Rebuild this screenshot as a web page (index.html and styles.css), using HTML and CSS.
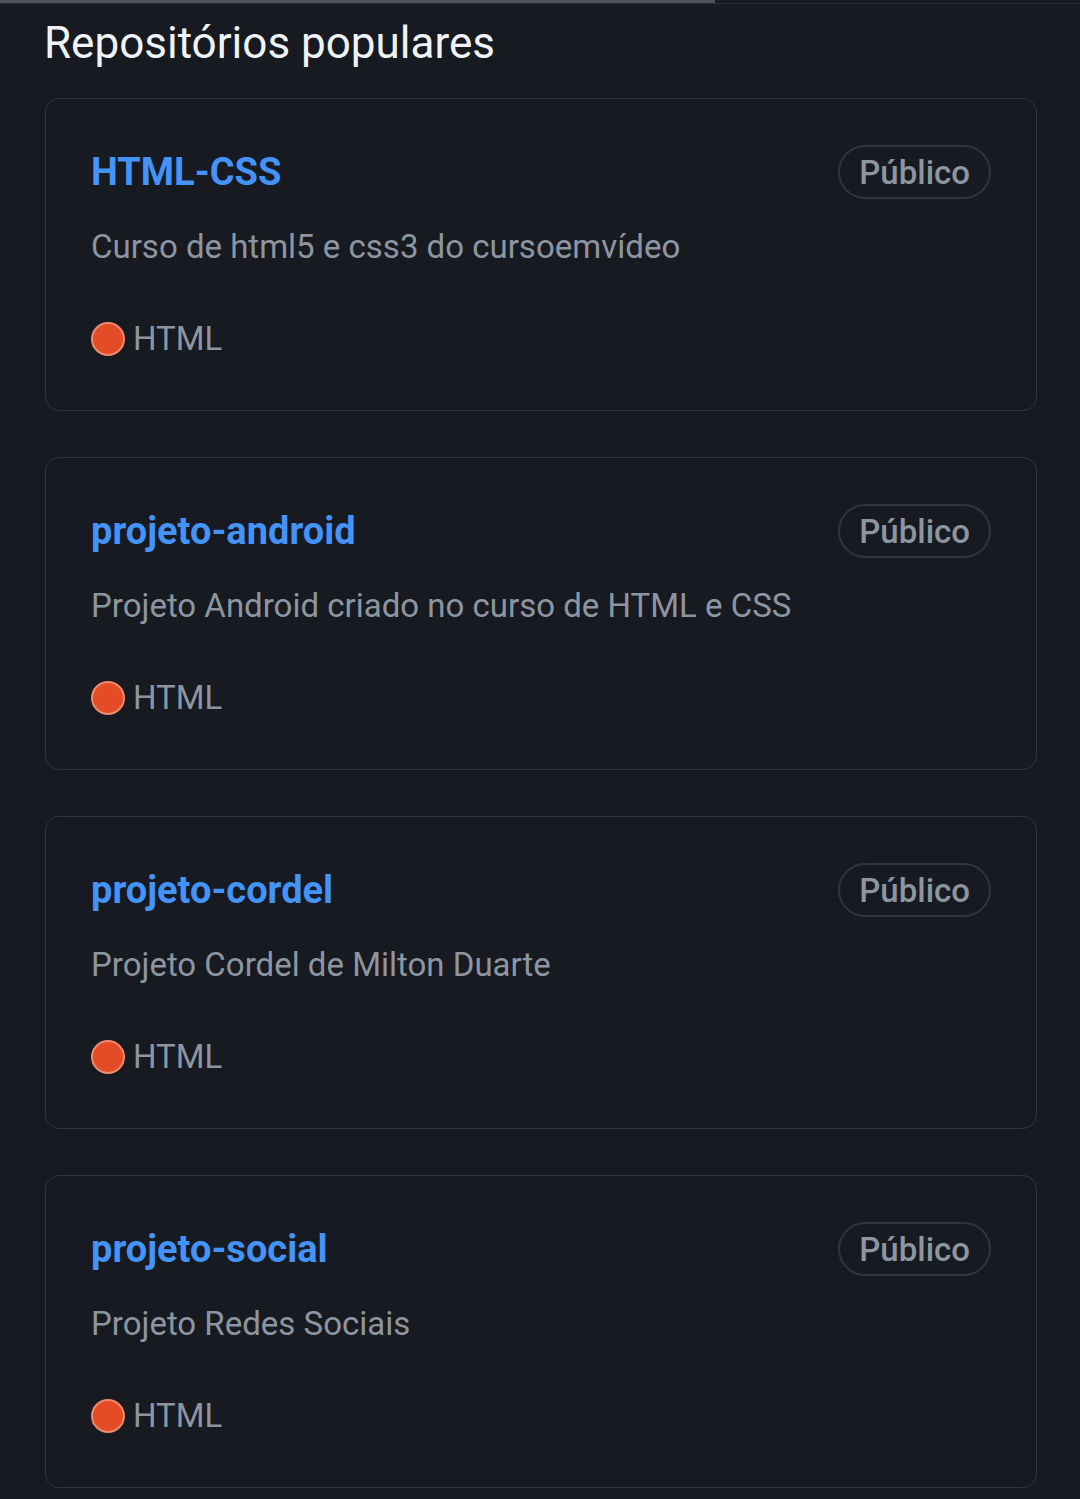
FILE: index.html
```html
<!DOCTYPE html>
<html lang="pt">
<head>
<meta charset="utf-8">
<title>Repositórios populares</title>
<link rel="stylesheet" href="styles.css">
</head>
<body>
<div class="topbar"><div class="topbar-fill"></div></div>
<main class="page">
  <h2 class="heading">Repositórios populares</h2>
  <div class="list">
    <div class="card">
      <div class="card-head"><a class="repo">HTML-CSS</a><span class="badge">Público</span></div>
      <p class="desc">Curso de html5 e css3 do cursoemvídeo</p>
      <div class="lang"><span class="dot"></span><span>HTML</span></div>
    </div>
    <div class="card">
      <div class="card-head"><a class="repo">projeto-android</a><span class="badge">Público</span></div>
      <p class="desc">Projeto Android criado no curso de HTML e CSS</p>
      <div class="lang"><span class="dot"></span><span>HTML</span></div>
    </div>
    <div class="card">
      <div class="card-head"><a class="repo">projeto-cordel</a><span class="badge">Público</span></div>
      <p class="desc">Projeto Cordel de Milton Duarte</p>
      <div class="lang"><span class="dot"></span><span>HTML</span></div>
    </div>
    <div class="card">
      <div class="card-head"><a class="repo">projeto-social</a><span class="badge">Público</span></div>
      <p class="desc">Projeto Redes Sociais</p>
      <div class="lang"><span class="dot"></span><span>HTML</span></div>
    </div>
  </div>
</main>
</body>
</html>
```
FILE: styles.css
```css
html, body {
  margin: 0;
  padding: 0;
  background: #171a21;
  font-family: Roboto, "Noto Sans", sans-serif;
}
.topbar {
  height: 3px;
  background: #171a21;
  border-bottom: 1px solid #2a2e35;
}
.topbar-fill {
  width: 715px;
  height: 3px;
  background: #4d5258;
}
.page {
  padding: 0 43px 0 45px;
}
.heading {
  margin: 0 0 0 -1px;
  padding-top: 14px;
  height: 94px;
  box-sizing: border-box;
  font-size: 44px;
  line-height: 50px;
  font-weight: 400;
  color: #f0f3f6;
}
.list {
  display: flex;
  flex-direction: column;
  gap: 46px;
}
.card {
  border: 1px solid #30363d;
  border-radius: 14px;
  padding: 46px 45px 51px 45px;
  height: 313px;
  box-sizing: border-box;
  display: flex;
  flex-direction: column;
}
.card-head {
  display: flex;
  align-items: center;
  justify-content: space-between;
  height: 54px;
}
.repo {
  color: #4493f8;
  font-size: 38px;
  font-weight: 700;
  text-decoration: none;
}
.badge {
  border: 2px solid #30363d;
  border-radius: 30px;
  height: 54px;
  box-sizing: border-box;
  padding: 0 19px;
  display: flex;
  align-items: center;
  font-size: 33px;
  font-weight: 500;
  color: #8d96a0;
}
.desc {
  margin: 28px 0 0 0;
  font-size: 33px;
  line-height: 40px;
  color: #8d96a0;
}
.lang {
  margin-top: 52px;
  display: flex;
  align-items: center;
  gap: 8px;
  font-size: 33px;
  line-height: 40px;
  color: #8d96a0;
}
.dot {
  width: 30px;
  height: 30px;
  border-radius: 50%;
  background: #e34c26;
  border: 2px solid #f08a6c;
}
```
